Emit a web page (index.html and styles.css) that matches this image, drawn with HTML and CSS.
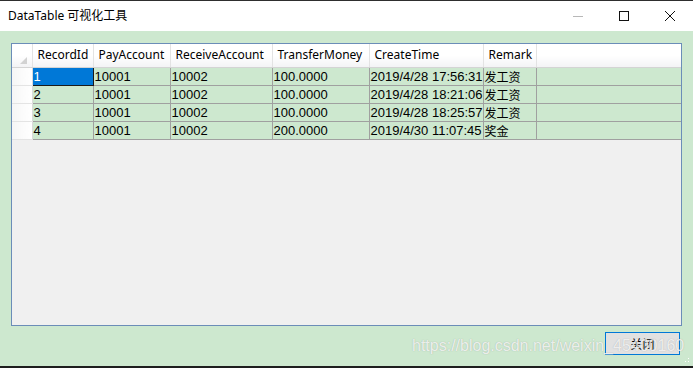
FILE: index.html
```html
<!DOCTYPE html>
<html lang="zh-CN">
<head>
  <meta charset="UTF-8">
  <title>DataTable 可视化工具</title>
  <link rel="stylesheet" href="styles.css">
</head>
<body>
  <div class="window">
    <div class="titlebar">
      <span class="title">DataTable 可视化工具</span>
      <div class="controls">
        <span class="ctl min"><svg width="12" height="12" viewBox="0 0 12 12"><line x1="1" y1="6.5" x2="11" y2="6.5" stroke="#b8b8b8" stroke-width="1"/></svg></span>
        <span class="ctl"><svg width="12" height="12" viewBox="0 0 12 12"><rect x="1.5" y="1.5" width="9" height="9" fill="none" stroke="#111" stroke-width="1"/></svg></span>
        <span class="ctl"><svg width="12" height="12" viewBox="0 0 12 12"><path d="M1 1L11 11M11 1L1 11" stroke="#111" stroke-width="1"/></svg></span>
      </div>
    </div>

    <div class="content">
      <div class="grid">
        <table class="data">
          <thead>
            <tr>
              <th class="corner"><span class="tri"></span></th>
              <th class="c1">RecordId</th>
              <th class="c2">PayAccount</th>
              <th class="c3">ReceiveAccount</th>
              <th class="c4">TransferMoney</th>
              <th class="c5">CreateTime</th>
              <th class="c6">Remark</th>
              <th class="fill"></th>
            </tr>
          </thead>
          <tbody>
            <tr>
              <td class="rh"></td>
              <td class="selected">1</td>
              <td>10001</td>
              <td>10002</td>
              <td>100.0000</td>
              <td>2019/4/28 17:56:31</td>
              <td class="cn">发工资</td>
              <td class="fill"></td>
            </tr>
            <tr>
              <td class="rh"></td>
              <td>2</td>
              <td>10001</td>
              <td>10002</td>
              <td>100.0000</td>
              <td>2019/4/28 18:21:06</td>
              <td class="cn">发工资</td>
              <td class="fill"></td>
            </tr>
            <tr>
              <td class="rh"></td>
              <td>3</td>
              <td>10001</td>
              <td>10002</td>
              <td>100.0000</td>
              <td>2019/4/28 18:25:57</td>
              <td class="cn">发工资</td>
              <td class="fill"></td>
            </tr>
            <tr>
              <td class="rh"></td>
              <td>4</td>
              <td>10001</td>
              <td>10002</td>
              <td>200.0000</td>
              <td>2019/4/30 11:07:45</td>
              <td class="cn">奖金</td>
              <td class="fill"></td>
            </tr>
          </tbody>
        </table>
      </div>

      <div class="footer">
        <button class="close-button">关闭</button>
      </div>
    </div>

    <span class="watermark">https://blog.csdn.net/weixin_45400160</span>
    <span class="grip"></span>
  </div>
</body>
</html>
```

FILE: styles.css
```css
* {
  margin: 0;
  padding: 0;
  box-sizing: border-box;
}

body {
  width: 693px;
  height: 368px;
  overflow: hidden;
  background-color: #cde8cf;
  font-family: 'Noto Sans', 'Noto Sans CJK SC', sans-serif;
  font-size: 12px;
  color: #000;
}

.window {
  position: relative;
  width: 693px;
  height: 368px;
  border-top: 1px solid #2e2e2e;
  border-bottom: 2px solid #1e1e1e;
  display: flex;
  flex-direction: column;
}

.titlebar {
  height: 30px;
  background-color: #ffffff;
  display: flex;
  align-items: center;
  justify-content: space-between;
  padding-left: 8px;
}

.title {
  font-size: 12px;
  font-family: 'Noto Sans', 'Noto Sans CJK SC', sans-serif;
  color: #000;
  margin-top: -2px;
}

.controls {
  display: flex;
  height: 100%;
}

.ctl {
  width: 46px;
  height: 100%;
  display: flex;
  align-items: center;
  justify-content: center;
}

.ctl svg {
  display: block;
}

.content {
  flex: 1;
  padding: 12px 12px 0 11px;
  display: flex;
  flex-direction: column;
}

.grid {
  height: 283px;
  width: 671px;
  background-color: #f0f0f0;
  border: 1px solid #6b8db8;
  overflow: hidden;
}

.data {
  border-collapse: collapse;
  table-layout: fixed;
  width: 669px;
  font-family: 'Liberation Sans', 'Noto Sans CJK SC', sans-serif;
  font-size: 13px;
}

.data th {
  height: 23px;
  font-family: 'Noto Sans', 'Noto Sans CJK SC', sans-serif;
  font-weight: normal;
  font-size: 12px;
  text-align: left;
  padding: 0 4px 1px 5px;
  white-space: nowrap;
  background: linear-gradient(#ffffff 50%, #f3f3f5);
  border-right: 1px solid #e3e3e3;
  border-bottom: 1px solid #d4d4d4;
}

.data th.corner {
  width: 20px;
  position: relative;
  padding: 0;
}

.tri {
  position: absolute;
  right: 5px;
  bottom: 3px;
  width: 0;
  height: 0;
  border-left: 7px solid transparent;
  border-bottom: 7px solid #d2d2d2;
}

.c1 { width: 61px; }
.c2 { width: 77px; }
.c3 { width: 102px; }
.c4 { width: 97px; }
.c5 { width: 114px; }
.c6 { width: 53px; }

.data th.fill {
  border-right: none;
}

.data td {
  height: 18px;
  padding: 1px 0 0 1px;
  white-space: nowrap;
  overflow: hidden;
  background-color: #cde8cf;
  border-right: 1px solid #a0a0a0;
  border-bottom: 1px solid #a0a0a0;
  line-height: 16px;
}

.data td.cn {
  font-family: 'Noto Sans CJK SC', sans-serif;
  font-size: 12px;
}

.data td.rh {
  background: linear-gradient(90deg, #f6f6f6, #ffffff);
  border-right: 1px solid #dadada;
  border-bottom: 1px solid #e4e4e4;
}

.data td.fill {
  border-right: none;
}

.data td.selected {
  background-color: #0078d7;
  color: #ffffff;
  border: 1px solid #1a1a1a;
}

.footer {
  display: flex;
  justify-content: flex-end;
  padding-top: 6px;
}

.close-button {
  width: 75px;
  height: 23px;
  background-color: #e1e1e1;
  border: 1px solid #0078d7;
  font-family: 'Noto Sans CJK SC', sans-serif;
  font-size: 12px;
  color: #000;
  margin-right: 1px;
}

.watermark {
  position: absolute;
  left: 412px;
  top: 336px;
  font-family: 'Liberation Sans', sans-serif;
  font-size: 16px;
  color: rgba(255, 255, 255, 0.8);
  text-shadow: 0 0 1px rgba(110, 110, 110, 0.5);
  white-space: nowrap;
}

.grip {
  position: absolute;
  right: 2px;
  bottom: 2px;
  width: 10px;
  height: 10px;
  background-image: radial-gradient(circle, #ffffff 0.8px, transparent 1px);
  background-size: 3px 3px;
  clip-path: polygon(100% 0, 100% 100%, 0 100%);
}
```
